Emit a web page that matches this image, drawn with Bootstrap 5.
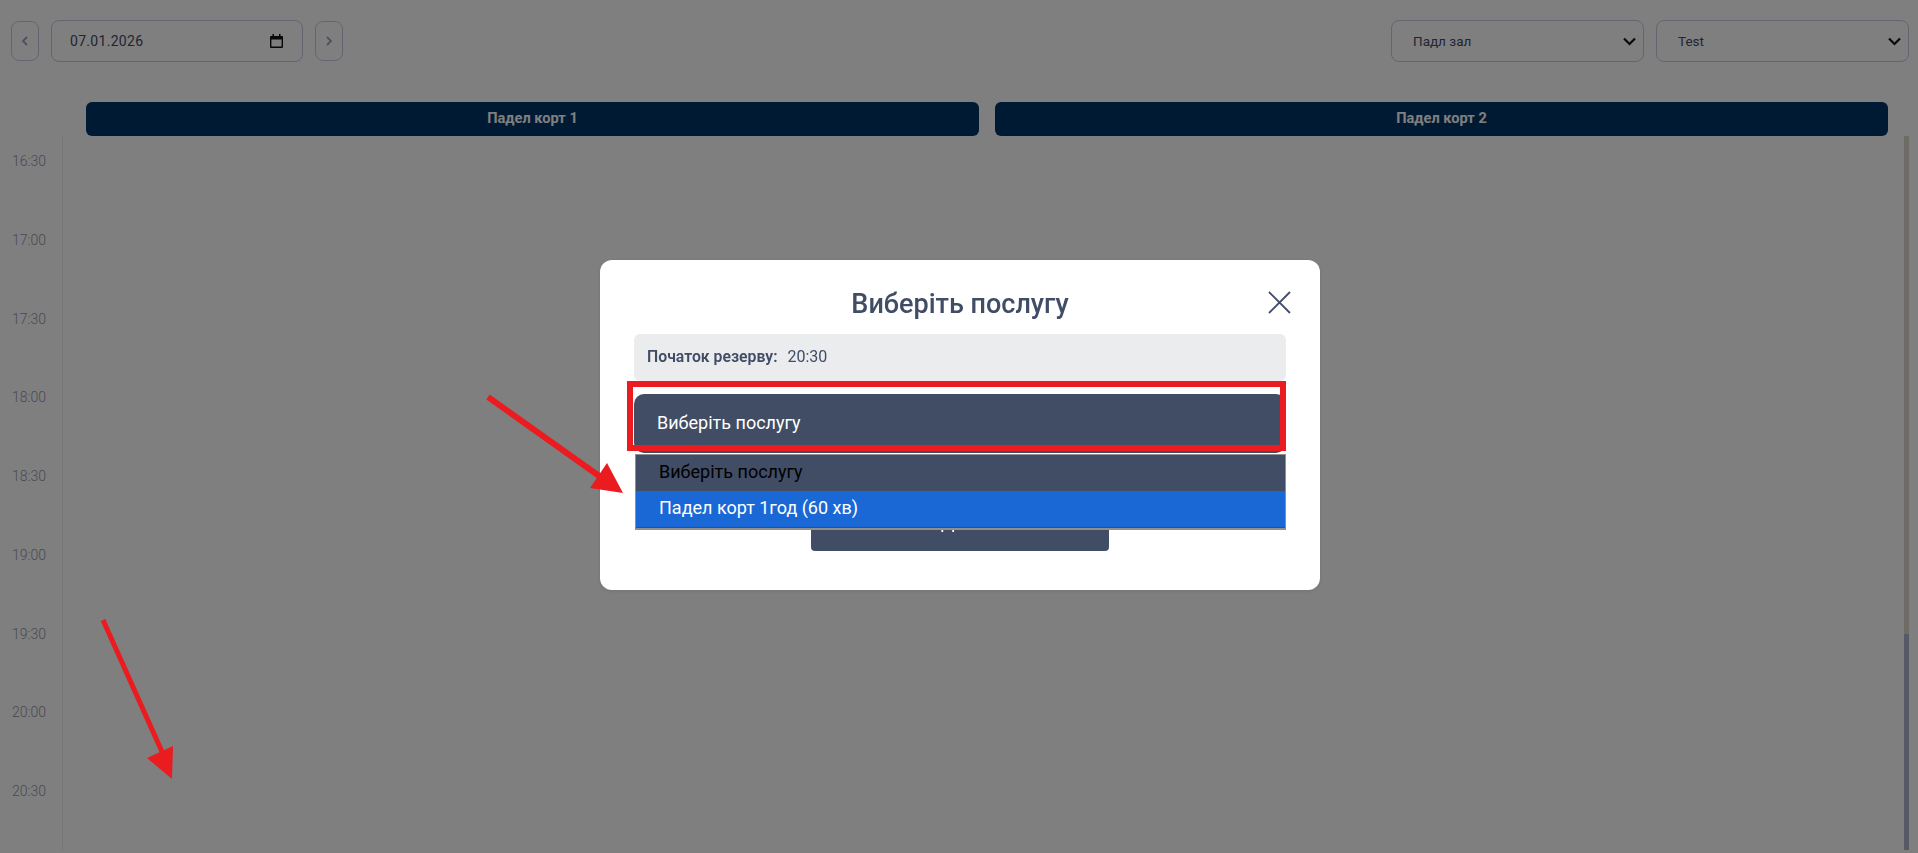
<!DOCTYPE html>
<html lang="uk">
<head>
<meta charset="utf-8">
<title>Бронювання</title>
<link href="https://cdn.jsdelivr.net/npm/bootstrap@5.3.0/dist/css/bootstrap.min.css" rel="stylesheet">
<style>
html,body{height:853px;overflow:hidden;}
body{font-family:Roboto,"Liberation Sans",sans-serif;color:#414c65;background:#fff;}
.toolbar{height:102px;padding:20px 9px 0 11px;}
.arrow-btn{width:28px;height:40px;margin-top:1px;padding:0;border:1px solid #c6cbe0;border-radius:8px;background:#fff;color:#9aa3bd;display:flex;align-items:center;justify-content:center;}
.date-box{width:252px;height:42px;margin:0 12px;padding:0 19px 0 18px;border:1px solid #c6cbe0;border-radius:8px;font-size:14px;letter-spacing:.3px;color:#414c65;}
.picker{width:253px;height:42px;font-size:13.5px;padding:0 30px 0 21px;border:1px solid #c6cbe0;border-radius:8px;color:#414c65;background-size:13px 9px;background-position:right 7px center;background-image:url("data:image/svg+xml,%3csvg xmlns='http://www.w3.org/2000/svg' viewBox='0 0 13 9'%3e%3cpath fill='none' stroke='%23101420' stroke-width='2.200' d='M1 1.500l5.500 5.500L12 1.500'/%3e%3c/svg%3e");}
.court-head{height:34px;padding:0 30px 0 86px;gap:16px;}
.court-bar{flex:1 1 0;background:#003469;color:#fff;border-radius:6px;font-size:14.6px;font-weight:700;line-height:32px;text-align:center;}
.sched{height:714px;padding-right:9px;}
.times{width:63px;padding:15px 0 0 12px;border-right:1px solid #ececec;font-size:14px;font-weight:300;color:#8f94a6;}
.time-row{height:78.75px;line-height:20px;}
.rail{width:5px;background:#ded6cc;}
.rail-thumb{height:216px;margin-top:498px;background:#aab4cc;}
.backdrop-veil{opacity:.5;}
.service-dialog{max-width:720px;margin:260px 0 0 600px;}
.service-box{height:330px;border:0;border-radius:12px;padding:0 34px;box-shadow:0 1px 4px rgba(0,0,0,.1);}
.service-title{margin:0;height:74px;line-height:88px;text-align:center;font-size:27px;font-weight:500;color:#414c65;}
.service-close{position:absolute;top:30px;right:29px;width:23px;height:23px;padding:0;border:0;background:none;}
.start-info{height:47px;margin-bottom:13px;padding:0 13px;background:#ebecee;border-radius:6px;font-size:16px;line-height:45px;}
.start-info b{font-weight:600;font-size:15.8px;margin-right:6px;}
.service-pick{position:relative;height:59px;}
.pick-face{height:59px;padding:0 23px;background:#414c65;color:#fff;border-radius:10px;font-size:18px;font-weight:400;line-height:58px;}
.pick-menu{position:absolute;top:60px;left:1px;right:0;z-index:3;border:1px solid #8f8f8f;border-bottom-width:2px;background:#414c65;font-size:18px;line-height:34px;padding-bottom:1px;}
.pick-item{height:36px;padding:0 23px;color:#000;}
.pick-item.is-active{background:#1a68d6;color:#fff;}
.confirm-wrap{margin-top:46px;text-align:center;}
.confirm-btn{width:298px;height:52px;padding:0 0 6px;border:0;border-radius:4px;background:#414c65;color:#fff;font-size:18px;font-weight:400;}
.notes{position:fixed;left:0;top:0;z-index:1060;pointer-events:none;}
</style>
</head>
<body>
<div class="toolbar d-flex align-items-start">
  <button class="arrow-btn" aria-label="Назад"><svg width="8" height="12" viewBox="0 0 8 12"><path d="M6 2 2 6l4 4" fill="none" stroke="currentColor" stroke-width="1.8"/></svg></button>
  <div class="date-box d-flex align-items-center justify-content-between">
    <span>07.01.2026</span>
    <svg width="13" height="14" viewBox="0 0 13 14"><path d="M1 2h11a1 1 0 0 1 1 1v10a1 1 0 0 1-1 1H1a1 1 0 0 1-1-1V3a1 1 0 0 1 1-1zm.4 3.500v7h10.200v-7z" fill="#111" fill-rule="evenodd"/><path d="M2.500 0h1.500v2H2.500zM9 0h1.500v2H9z" fill="#111"/></svg>
  </div>
  <button class="arrow-btn" aria-label="Вперед"><svg width="8" height="12" viewBox="0 0 8 12"><path d="m2 2 4 4-4 4" fill="none" stroke="currentColor" stroke-width="1.8"/></svg></button>
  <div class="ms-auto d-flex gap-2">
    <select class="form-select picker me-1"><option>Падл зал</option></select>
    <select class="form-select picker"><option>Test</option></select>
  </div>
</div>
<div class="court-head d-flex">
  <div class="court-bar">Падел корт 1</div>
  <div class="court-bar">Падел корт 2</div>
</div>
<div class="sched d-flex justify-content-between">
  <div class="times">
    <div class="time-row">16:30</div>
    <div class="time-row">17:00</div>
    <div class="time-row">17:30</div>
    <div class="time-row">18:00</div>
    <div class="time-row">18:30</div>
    <div class="time-row">19:00</div>
    <div class="time-row">19:30</div>
    <div class="time-row">20:00</div>
    <div class="time-row">20:30</div>
  </div>
  <div class="rail"><div class="rail-thumb"></div></div>
</div>

<div class="modal-backdrop show backdrop-veil"></div>
<div class="modal d-block">
  <div class="modal-dialog service-dialog">
    <div class="modal-content service-box">
      <h2 class="service-title">Виберіть послугу</h2>
      <button class="service-close" aria-label="Закрити"><svg width="23" height="23" viewBox="0 0 23 23"><path d="M1 1l21 21M22 1 1 22" fill="none" stroke="#414c65" stroke-width="1.800"/></svg></button>
      <div class="start-info"><b>Початок резерву:</b> <span>20:30</span></div>
      <div class="service-pick">
        <div class="pick-face">Виберіть послугу</div>
        <div class="pick-menu">
          <div class="pick-item">Виберіть послугу</div>
          <div class="pick-item is-active">Падел корт 1год (60 хв)</div>
        </div>
      </div>
      <div class="confirm-wrap"><button class="confirm-btn">Далі</button></div>
    </div>
  </div>
</div>

<svg class="notes" width="1918" height="853" viewBox="0 0 1918 853">
  <rect x="630" y="384" width="653" height="64" fill="none" stroke="#ea1c1f" stroke-width="6"/>
  <path d="M488 397 602 478" stroke="#ea1c1f" stroke-width="6" fill="none"/>
  <path d="M623 493 590 488 607 463z" fill="#ea1c1f"/>
  <path d="M103 620 163 754" stroke="#ea1c1f" stroke-width="5" fill="none"/>
  <path d="M172 779 147 758 173 746z" fill="#ea1c1f"/>
</svg>
<script src="https://cdn.jsdelivr.net/npm/bootstrap@5.3.0/dist/js/bootstrap.bundle.min.js"></script>
</body>
</html>
